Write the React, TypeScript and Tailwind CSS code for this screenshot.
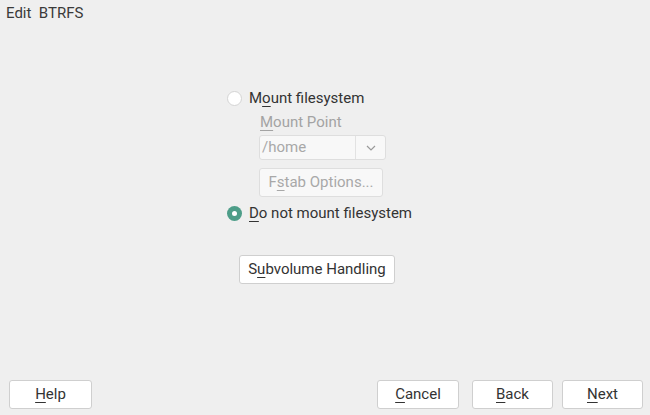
import React from "react";

function Mn({ children }: { children: React.ReactNode }) {
  return <span className="underline decoration-1 underline-offset-[3px]">{children}</span>;
}

function Radio({ checked }: { checked?: boolean }) {
  return checked ? (
    <span className="flex h-[15px] w-[15px] items-center justify-center rounded-full bg-[#4d9d88]">
      <span className="h-[5px] w-[5px] rounded-full bg-white" />
    </span>
  ) : (
    <span className="h-[15px] w-[15px] rounded-full border border-[#d4d4d4] bg-white" />
  );
}

function Btn({ children, w }: { children: React.ReactNode; w: string }) {
  return (
    <button
      type="button"
      className={`${w} flex h-[29px] items-center justify-center rounded-[3px] border border-[#cfcfcf] bg-white text-[15px] text-[#333]`}
    >
      {children}
    </button>
  );
}

export default function App() {
  return (
    <div
      className="flex h-[415px] w-[650px] flex-col bg-[#efefef] text-[#333]"
      style={{ fontFamily: "Roboto, 'Liberation Sans', sans-serif" }}
    >
      <div className="pl-[6px] pt-[4px] text-[15px] leading-[18px] text-[#3a3a3a]">
        Edit&nbsp; BTRFS
      </div>

      <div className="flex flex-col pl-[227px] pt-[67px]">
        <div className="flex h-[18px] items-center gap-[7px]">
          <Radio />
          <span className="text-[15px] leading-[18px]">
            M<Mn>o</Mn>unt filesystem
          </span>
        </div>

        <div className="flex flex-col pl-[32px] pt-[6px]">
          <div className="pl-[1px] text-[15px] leading-[18px] text-[#a3a3a3]">
            <Mn>M</Mn>ount Point
          </div>
          <div className="mt-[4px] flex h-[25px] w-[127px] items-stretch rounded-[3px] border border-[#dedede] bg-[#f8f8f8]">
            <span className="flex flex-1 items-center pl-[2px] text-[15px] text-[#a8a8a8]">/home</span>
            <span className="flex w-[30px] items-center justify-center border-l border-[#e2e2e2]">
              <svg width="10" height="6" viewBox="0 0 10 6" fill="none">
                <path d="M1 1l4 4 4-4" stroke="#9a9a9a" strokeWidth="1.2" />
              </svg>
            </span>
          </div>
          <div className="mt-[8px] flex h-[29px] w-[124px] items-center justify-center rounded-[3px] border border-[#dedede] bg-[#f8f8f8] text-[15px] text-[#a8a8a8]">
            F<Mn>s</Mn>tab Options...
          </div>
        </div>

        <div className="mt-[7px] flex h-[18px] items-center gap-[7px]">
          <Radio checked />
          <span className="text-[15px] leading-[18px]">
            <Mn>D</Mn>o not mount filesystem
          </span>
        </div>

        <div className="mt-[33px] pl-[12px]">
          <Btn w="w-[156px]">
            S<Mn>u</Mn>bvolume Handling
          </Btn>
        </div>
      </div>

      <div className="mt-auto flex items-center pl-[9px] pr-[7px] pb-[6px]">
        <Btn w="w-[83px]">
          <Mn>H</Mn>elp
        </Btn>
        <div className="flex-1" />
        <Btn w="w-[82px]">
          <Mn>C</Mn>ancel
        </Btn>
        <div className="w-[13px]" />
        <Btn w="w-[81px]">
          <Mn>B</Mn>ack
        </Btn>
        <div className="w-[9px]" />
        <Btn w="w-[81px]">
          <Mn>N</Mn>ext
        </Btn>
      </div>
    </div>
  );
}
